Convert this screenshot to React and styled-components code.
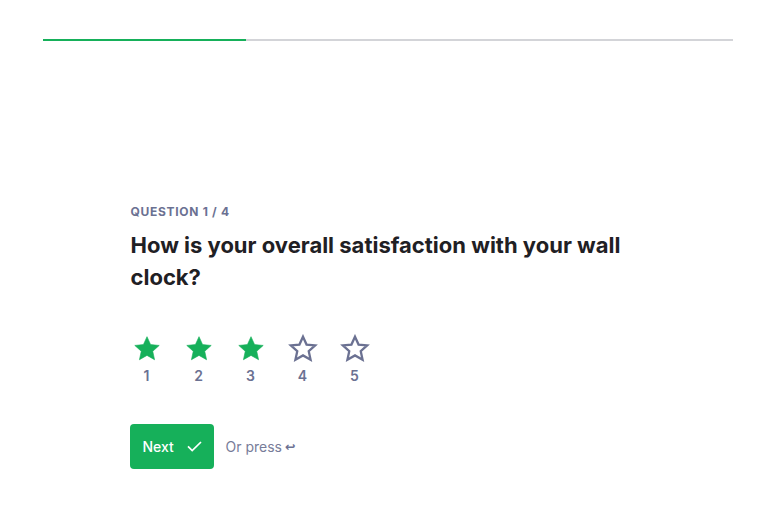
import React from "react";
import styled, { createGlobalStyle } from "styled-components";

const Global = createGlobalStyle`
  html, body { margin: 0; padding: 0; background: #fff; }
  body { font-family: "Inter", "Liberation Sans", sans-serif; -webkit-font-smoothing: antialiased; }
`;

const Page = styled.div`
  width: 773px;
  min-height: 515px;
  display: flex;
  flex-direction: column;
`;

const Track = styled.div`
  margin: 39px 40px 0 43px;
  height: 2px;
  background: #d3d4d8;
  display: flex;
`;

const Fill = styled.div`
  height: 100%;
  background: #16b05a;
`;

const Content = styled.main`
  width: 512px;
  margin: 163px auto 0;
  display: flex;
  flex-direction: column;
`;

const Label = styled.div`
  font-size: 12px;
  line-height: 16px;
  font-weight: 700;
  letter-spacing: 0.7px;
  color: #6b7192;
  text-transform: uppercase;
`;

const Title = styled.h1`
  margin: 9px 0 0;
  font-size: 22px;
  line-height: 32px;
  font-weight: 700;
  color: #1f2024;
  letter-spacing: 0;
`;

const Stars = styled.div`
  display: flex;
  gap: 24px;
  margin-top: 41px;
  margin-left: 2px;
`;

const StarItem = styled.button`
  all: unset;
  width: 28px;
  display: flex;
  flex-direction: column;
  align-items: center;
  gap: 3px;
  cursor: pointer;
`;

const Num = styled.span`
  font-size: 14px;
  line-height: 20px;
  font-weight: 600;
  color: #6b7192;
`;

const Actions = styled.div`
  display: flex;
  align-items: center;
  gap: 12px;
  margin-top: 38px;
  margin-left: -1px;
`;

const NextButton = styled.button`
  all: unset;
  box-sizing: border-box;
  height: 45px;
  width: 84px;
  padding-left: 13px;
  border-radius: 4px;
  background: #16b05a;
  color: #fff;
  display: flex;
  align-items: center;
  gap: 13px;
  font-size: 14px;
  font-weight: 500;
  cursor: pointer;
`;

const Hint = styled.span`
  font-size: 14px;
  color: #777c99;
  display: flex;
  align-items: center;
  gap: 3px;
`;

const Enter = styled.span`
  font-family: "DejaVu Sans", sans-serif;
  font-size: 12.5px;
  font-weight: 700;
  color: #6b7192;
`;

const StarIcon = ({ filled }) => (
  <svg width="30" height="29" viewBox="0 0 24 24">
    <path
      d="M12 2.2l2.95 6.55 7.15.72-5.35 4.8 1.52 7.03L12 17.7l-6.27 3.6 1.52-7.03L1.9 9.47l7.15-.72z"
      fill={filled ? "#16b05a" : "none"}
      stroke={filled ? "#16b05a" : "#6b7192"}
      strokeWidth={filled ? 0.5 : 1.9}
      strokeLinejoin="miter"
    />
  </svg>
);

const Check = () => (
  <svg width="15" height="11" viewBox="0 0 15 11">
    <path d="M1 5.4l4.2 4.2L14 1" fill="none" stroke="#fff" strokeWidth="1.7" />
  </svg>
);

export default function App() {
  const rating = 3;
  return (
    <Page>
      <Global />
      <Track>
        <Fill style={{ width: "203px" }} />
      </Track>
      <Content>
        <Label>Question 1 / 4</Label>
        <Title>How is your overall satisfaction with your wall clock?</Title>
        <Stars>
          {[1, 2, 3, 4, 5].map((n) => (
            <StarItem key={n}>
              <StarIcon filled={n <= rating} />
              <Num>{n}</Num>
            </StarItem>
          ))}
        </Stars>
        <Actions>
          <NextButton>
            Next <Check />
          </NextButton>
          <Hint>
            Or press <Enter>↩</Enter>
          </Hint>
        </Actions>
      </Content>
    </Page>
  );
}
